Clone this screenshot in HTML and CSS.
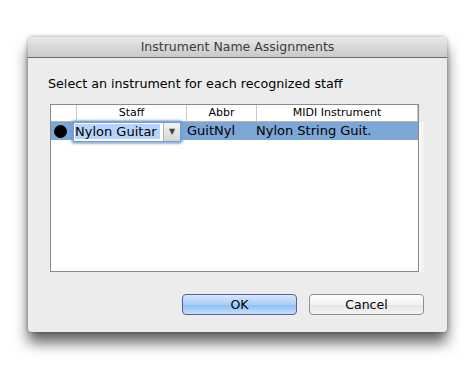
FILE: index.html
```html
<!DOCTYPE html>
<html lang="en">
<head>
    <meta charset="UTF-8">
    <title>Instrument Name Assignments</title>
    <link rel="stylesheet" href="styles.css">
</head>
<body>
    <div class="desk">
        <div class="window">
            <div class="titlebar">Instrument Name Assignments</div>

            <div class="content">
                <p class="prompt">Select an instrument for each recognized staff</p>

                <div class="table-wrap">
                    <div class="table">
                        <div class="thead">
                            <div class="th"></div>
                            <div class="th">Staff</div>
                            <div class="th">Abbr</div>
                            <div class="th">MIDI Instrument</div>
                            <div class="th"></div>
                        </div>
                        <div class="row selected">
                            <div class="cell dot-cell"><span class="dot"></span></div>
                            <div class="combo">
                                <span class="combo-text"><span class="sel">Nylon Guitar</span></span>
                                <span class="combo-arrow">&#9660;</span>
                            </div>
                            <div class="cell abbr">GuitNyl</div>
                            <div class="cell midi">Nylon String Guit.</div>
                        </div>
                    </div>
                    <div class="side-strip"></div>
                </div>

                <div class="buttons">
                    <button class="btn btn-default">OK</button>
                    <button class="btn">Cancel</button>
                </div>
            </div>
        </div>
    </div>
</body>
</html>
```

FILE: styles.css
```css
* {
    margin: 0;
    padding: 0;
    box-sizing: border-box;
}

html, body {
    background: #fff;
}

body {
    font-family: 'DejaVu Sans', 'Liberation Sans', sans-serif;
    color: #000;
}

.desk {
    width: 475px;
    height: 370px;
    padding: 37px 0 0 28px;
    background: #fff;
}

.window {
    width: 419px;
    height: 295px;
    background: #ececec;
    border-radius: 5px 5px 4px 4px;
    box-shadow: 0 11px 14px rgba(0, 0, 0, 0.6), 0 0 4px rgba(0, 0, 0, 0.35);
}

.titlebar {
    height: 21px;
    line-height: 20px;
    text-align: center;
    font-size: 12.5px;
    color: #3c3c3c;
    background: linear-gradient(#e9e9e9, #c9c9c9);
    border-bottom: 1px solid #6b6b6b;
    border-radius: 5px 5px 0 0;
}

.content {
    padding: 18px 23px 17px 20px;
}

.prompt {
    font-size: 12.7px;
    line-height: 16px;
    margin-bottom: 12px;
}

.table-wrap {
    display: flex;
    align-items: flex-end;
}

.table {
    width: 372px;
    height: 168px;
    margin-left: 2px;
    background: #fff;
    border: 1px solid #8a8a8a;
}

.side-strip {
    width: 14px;
    height: 150px;
    background: linear-gradient(to right, #fafafa, #f1f1f1);
}

.thead {
    display: grid;
    grid-template-columns: 25px 110px 70px 161px 1fr;
    height: 17px;
    border-bottom: 1px solid #b5b5b5;
    background: #fff;
}

.th {
    font-size: 11px;
    line-height: 16px;
    text-align: center;
    border-left: 1px solid #c9c9c9;
}

.th:first-child {
    border-left: none;
}

.row {
    display: flex;
    align-items: center;
    height: 18px;
}

.row.selected {
    background: #7ca6d6;
}

.cell {
    font-size: 13px;
    line-height: 18px;
}

.dot-cell {
    width: 22px;
    padding-left: 3px;
    display: flex;
    align-items: center;
}

.dot {
    width: 13px;
    height: 13px;
    border-radius: 50%;
    background: #000;
}

.combo {
    display: flex;
    width: 108px;
    height: 20px;
    margin-top: 1px;
    background: #fff;
    border: 1px solid #7a9bc9;
    border-radius: 2px;
    box-shadow: 0 0 2px 2px rgba(110, 160, 220, 0.75);
}

.combo-text {
    flex: 1;
    padding-left: 1px;
    font-size: 13px;
    line-height: 18px;
}

.sel {
    background: #b5d3fb;
    padding-right: 3px;
}

.combo-arrow {
    width: 17px;
    font-size: 8px;
    line-height: 18px;
    text-align: center;
    color: #444;
    background: linear-gradient(#f4f4f4, #d6d6d6);
    border-left: 1px solid #b0b0b0;
}

.abbr {
    width: 70px;
    padding-left: 6px;
}

.midi {
    padding-left: 5px;
}

.buttons {
    display: flex;
    justify-content: flex-end;
    gap: 12px;
    margin-top: 22px;
}

.btn {
    width: 115px;
    height: 21px;
    font-family: inherit;
    font-size: 12.5px;
    color: #000;
    border: 1px solid #8e8e8e;
    border-radius: 4px;
    background: linear-gradient(#ffffff, #f2f2f2 50%, #e6e6e6 52%, #f4f4f4);
}

.btn-default {
    border-color: #5a5f9c;
    background: linear-gradient(#d4e7fc, #a9cef6 50%, #8dbdf2 52%, #c3e1fb);
}
```
